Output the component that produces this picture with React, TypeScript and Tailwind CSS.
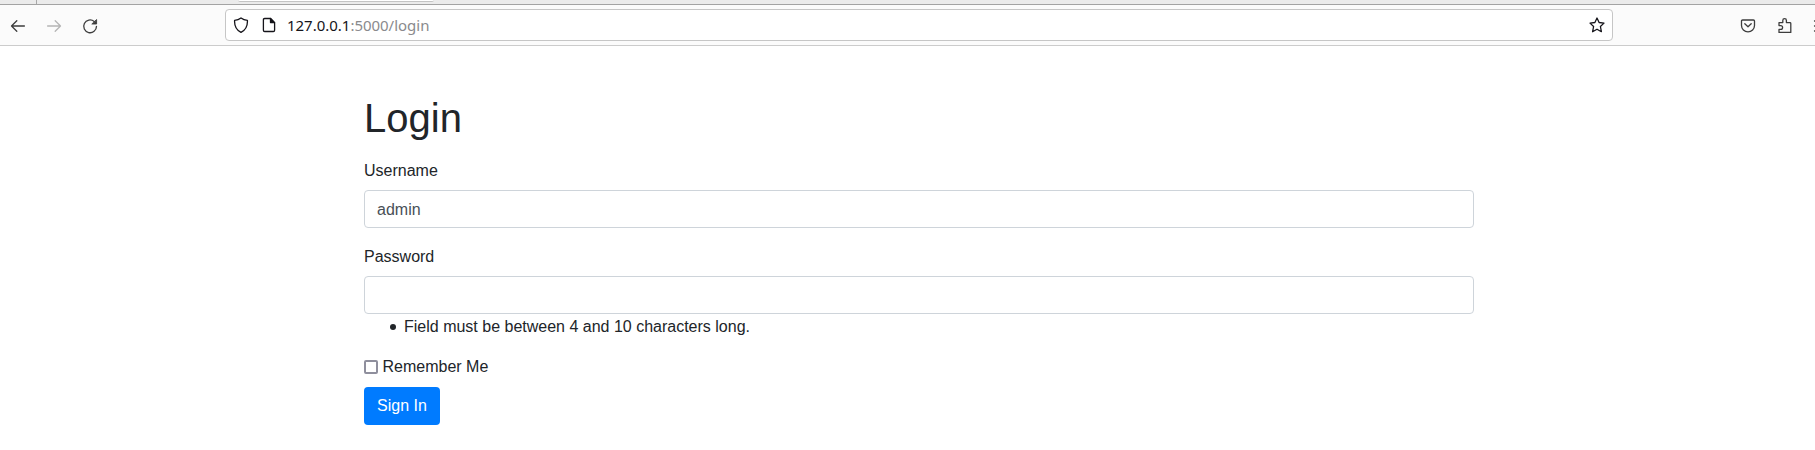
import React from "react";

function Line({ children, className = "" }: { children: React.ReactNode; className?: string }) {
  return (
    <svg viewBox="0 0 16 16" fill="none" stroke="currentColor" strokeWidth="1.3" strokeLinecap="round" strokeLinejoin="round" className={`h-4 w-4 shrink-0 ${className}`}>
      {children}
    </svg>
  );
}

function Toolbar() {
  return (
    <header>
      <div className="flex h-1 bg-[#ebebeb]">
        <div className="w-9" />
        <div className="w-px bg-[#a8a8a8]" />
        <div className="w-[201px]" />
        <div className="h-[2px] w-[196px] rounded-b-sm border-b border-[#c4c4c4] bg-white" />
      </div>
      <div className="flex h-[42px] items-center border-b border-t border-b-[#cccccc] border-t-[#a3a3a3] bg-[#fbfbfb] text-[#3d3d3d]">
        <div className="flex w-[225px] items-center gap-5 pl-[10px] pt-px">
          <Line>
            <path d="M14.4 8H1.5M6.8 2.7L1.5 8L6.8 13.3" />
          </Line>
          <Line className="text-[#b5b5b5]">
            <path d="M1.6 8H14.5M9.2 2.7L14.5 8L9.2 13.3" />
          </Line>
          <Line>
            <path d="M14.5 8.3A6.4 6.4 0 1 1 12.2 3.4" />
            <path d="M14.6 1.9V6H10.2Z" fill="currentColor" strokeWidth="0.9" />
          </Line>
        </div>
        <div className="flex h-8 w-[1388px] items-center rounded border border-[#c6c6c6] bg-white px-[7px] text-[#15141a]">
          <Line>
            <path d="M8 0.9C10 2.4 12 3.1 14.4 3.4C14.7 8.5 12.5 13.2 8 15.4C3.5 13.2 1.3 8.5 1.6 3.4C4 3.1 6 2.4 8 0.9Z" />
          </Line>
          <Line className="ml-3">
            <path d="M9.5 1.5H3.7Q2.4 1.5 2.4 2.8V13.2Q2.4 14.5 3.7 14.5H12.3Q13.6 14.5 13.6 13.2V5.6Z" />
            <path d="M9.5 1.5V5.6H13.6Z" fill="currentColor" />
          </Line>
          <span className="ml-[10px] flex-1 font-['Noto_Sans',sans-serif] text-[15px] leading-5 tracking-[-0.02px] text-[#8a8a8d]">
            <span className="text-[#15141a]">127.0.0.1</span>:5000/login
          </span>
          <Line>
            <path d="M8 1L10.1 5.5L15 6.1L11.4 9.5L12.4 14.7L8 12.2L3.6 14.7L4.6 9.5L1 6.1L5.9 5.5Z" />
          </Line>
        </div>
        <div className="flex flex-1 items-center gap-5 overflow-hidden pl-[127px] pt-px">
          <Line>
            <path d="M2.6 2H13.4Q14.5 2 14.5 3.1V7.5A6.5 6.3 0 0 1 1.5 7.5V3.1Q1.5 2 2.6 2Z" />
            <path d="M4.8 5.8L8 8.8L11.2 5.8" />
          </Line>
          <Line className="ml-px">
            <path d="M2 7.2V4.6H5.8V2.4A1.8 1.7 0 0 1 9.4 2.4V4.6H13Q13.8 4.6 13.8 5.4V14.4H2V11.4H3.7A1.8 1.8 0 0 0 3.7 7.6H2" />
          </Line>
          <Line>
            <path d="M1.5 3H14.5M1.5 8H14.5M1.5 13H14.5" />
          </Line>
        </div>
      </div>
    </header>
  );
}

export default function App() {
  return (
    <div className="h-[450px] overflow-hidden bg-white font-['Liberation_Sans',Arial,sans-serif] text-base text-[#212529]">
      <Toolbar />
      <main className="ml-[364px] w-[1110px] pt-12">
        <h1 className="mb-[17px] text-[40px] font-medium leading-[48px]">Login</h1>
        <form noValidate onSubmit={(e) => e.preventDefault()}>
          <label htmlFor="username" className="mb-[7px] block">Username</label>
          <input id="username" defaultValue="admin" className="mb-[17px] block h-[38px] w-full rounded border border-[#ced4da] px-3 pt-0.5 text-[#495057]" />
          <label htmlFor="password" className="mb-[7px] block">Password</label>
          <input id="password" type="password" className="block h-[38px] w-full rounded border border-[#ced4da] px-3 text-[#495057]" />
          <ul className="mb-4 pl-[26px] pt-px">
            <li className="flex items-center">
              <span className="mr-2 h-1.5 w-1.5 shrink-0 rounded-full bg-[#212529]" />
              Field must be between 4 and 10 characters long.
            </li>
          </ul>
          <label className="mb-2 flex h-6 items-center">
            <input type="checkbox" className="mr-[4.5px] h-[14px] w-[14px] appearance-none rounded-[2px] border-2 border-[#8f8f9d] bg-white" />
            Remember Me
          </label>
          <button type="submit" className="h-[38px] w-[76px] rounded bg-[#007bff] text-white">Sign In</button>
        </form>
      </main>
    </div>
  );
}
